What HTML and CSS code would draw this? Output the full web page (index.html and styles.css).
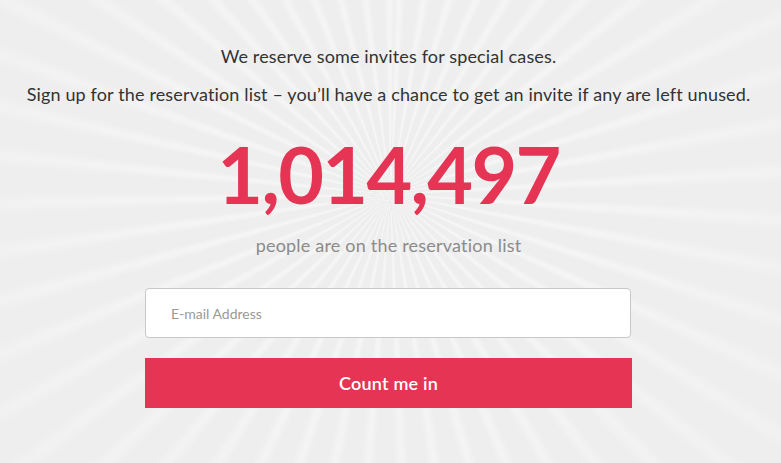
FILE: index.html
```html
<!DOCTYPE html>
<html lang="en">
<head>
<meta charset="utf-8">
<title>Reservation list</title>
<link rel="stylesheet" href="styles.css">
</head>
<body>
<main class="page">
  <p class="intro">We reserve some invites for special cases.</p>
  <p class="intro">Sign up for the reservation list – you’ll have a chance to get an invite if any are left unused.</p>
  <div class="count">1,014,497</div>
  <p class="count-label">people are on the reservation list</p>
  <form class="signup" onsubmit="return false">
    <input class="email" type="email" placeholder="E-mail Address">
    <button class="submit" type="submit">Count me in</button>
  </form>
</main>
</body>
</html>
```
FILE: styles.css
```css
html, body {
  margin: 0;
  padding: 0;
  height: 100%;
}
body {
  font-family: Lato, "Open Sans", sans-serif;
  color: #333;
  background-color: #eeeeee;
  background-image:
    radial-gradient(circle at 50% 42%, rgba(238,238,238,0) 0, rgba(238,238,238,0.3) 220px, rgba(238,238,238,0.85) 560px),
    repeating-conic-gradient(from 1deg at 50% 42%, rgba(255,255,255,0) 0deg, rgba(255,255,255,0.5) 1.4deg, rgba(255,255,255,0.5) 2deg, rgba(255,255,255,0) 3.4deg, rgba(255,255,255,0) 7deg);
  overflow: hidden;
}
.page {
  display: flex;
  flex-direction: column;
  align-items: center;
  padding: 46px 4px 0 0;
}
.intro {
  margin: 0 0 18px;
  font-size: 18px;
  line-height: 20px;
  letter-spacing: 0.15px;
  color: #333;
  text-align: center;
  white-space: nowrap;
}
.count {
  margin-top: 12px;
  font-size: 79px;
  font-weight: 700;
  line-height: 79px;
  letter-spacing: -1.7px;
  color: #e63455;
}
.count-label {
  margin: 22px 0 0;
  font-size: 18px;
  line-height: 20px;
  letter-spacing: 0.2px;
  color: #8b8b8b;
}
.signup {
  display: flex;
  flex-direction: column;
  gap: 20px;
  width: 487px;
  margin-top: 33px;
}
.email {
  box-sizing: border-box;
  width: 486px;
  height: 50px;
  padding: 0 25px;
  border: 1px solid #c8c8c8;
  border-radius: 4px;
  background: #fff;
  font-family: inherit;
  font-size: 14px;
  color: #333;
  outline: none;
}
.email::placeholder {
  color: #999;
}
.submit {
  height: 50px;
  border: 0;
  background: #e63455;
  color: #fff;
  font-family: inherit;
  font-size: 18px;
  font-weight: 600;
  letter-spacing: 0.2px;
  cursor: pointer;
}
```
